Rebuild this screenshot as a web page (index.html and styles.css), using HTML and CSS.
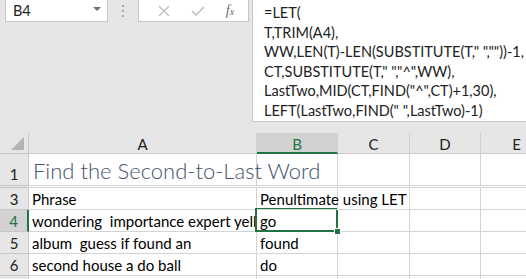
FILE: index.html
```html
<!DOCTYPE html>
<html lang="en">
<head>
    <meta charset="UTF-8" />
    <title>Find the Second-to-Last Word</title>
    <link rel="stylesheet" href="styles.css">
</head>
<body>
    <div class="app">
        <!-- Formula bar area -->
        <div class="topbar">
            <div class="name-box">
                <span>B4</span>
                <span class="caret"></span>
            </div>
            <div class="grip"><i></i><i></i><i></i></div>
            <div class="fx-buttons">
                <svg width="14" height="14" viewBox="0 0 14 14"><path d="M2 2 L12 12 M12 2 L2 12" stroke="#c0c0c0" stroke-width="1.4" fill="none"/></svg>
                <svg width="16" height="14" viewBox="0 0 16 14"><path d="M2 7 L6 11 L14 3" stroke="#c0c0c0" stroke-width="1.6" fill="none"/></svg>
                <span class="fx">f<sub>x</sub></span>
            </div>
            <div class="formula">
                <div>=LET(</div>
                <div>T,TRIM(A4),</div>
                <div>WW,LEN(T)-LEN(SUBSTITUTE(T," ",""))-1,</div>
                <div>CT,SUBSTITUTE(T," ","^",WW),</div>
                <div>LastTwo,MID(CT,FIND("^",CT)+1,30),</div>
                <div>LEFT(LastTwo,FIND(" ",LastTwo)-1)</div>
            </div>
        </div>

        <!-- Worksheet grid -->
        <div class="sheet">
            <div class="hd corner"><span class="tri"></span></div>
            <div class="hd col">A</div>
            <div class="hd col sel">B</div>
            <div class="hd col">C</div>
            <div class="hd col">D</div>
            <div class="hd col">E</div>

            <div class="rh tall">1</div>
            <div class="cell tall title">Find the Second-to-Last Word</div>
            <div class="cell tall"></div>
            <div class="cell tall"></div>
            <div class="cell tall"></div>
            <div class="cell tall"></div>

            <div class="rh hidden"></div>
            <div class="cell hidden"></div>
            <div class="cell hidden"></div>
            <div class="cell hidden"></div>
            <div class="cell hidden"></div>
            <div class="cell hidden"></div>

            <div class="rh">3</div>
            <div class="cell">Phrase</div>
            <div class="cell overflow">Penultimate using LET</div>
            <div class="cell"></div>
            <div class="cell"></div>
            <div class="cell"></div>

            <div class="rh sel">4</div>
            <div class="cell">wondering&nbsp; importance expert yell</div>
            <div class="cell active">go</div>
            <div class="cell"></div>
            <div class="cell"></div>
            <div class="cell"></div>

            <div class="rh">5</div>
            <div class="cell">album&nbsp; guess if found an</div>
            <div class="cell">found</div>
            <div class="cell"></div>
            <div class="cell"></div>
            <div class="cell"></div>

            <div class="rh">6</div>
            <div class="cell">second house a do ball</div>
            <div class="cell">do</div>
            <div class="cell"></div>
            <div class="cell"></div>
            <div class="cell"></div>

            <div class="rh"></div>
            <div class="cell"></div>
            <div class="cell"></div>
            <div class="cell"></div>
            <div class="cell"></div>
            <div class="cell"></div>
        </div>
    </div>
</body>
</html>
```

FILE: styles.css
```css
/* Base */
body {
    margin: 0;
    background-color: #e6e6e6;
    font-family: 'Lato', 'Liberation Sans', sans-serif;
    color: #000;
    overflow: hidden;
}

.app {
    width: 526px;
    height: 279px;
    overflow: hidden;
}

/* Formula bar */
.topbar {
    display: flex;
    align-items: flex-start;
    height: 133px;
}

.name-box {
    margin-left: 5px;
    width: 103px;
    height: 23px;
    margin-top: -1px;
    box-sizing: border-box;
    background-color: #fff;
    border: 1px solid #c6c6c6;
    display: flex;
    align-items: center;
    justify-content: space-between;
    padding: 0 6px 0 7px;
    font-size: 14.5px;
    color: #222;
}

.caret {
    width: 0;
    height: 0;
    border-left: 4px solid transparent;
    border-right: 4px solid transparent;
    border-top: 4px solid #707070;
    margin-top: -3px;
}

.grip {
    width: 30px;
    display: flex;
    flex-direction: column;
    align-items: center;
    gap: 3px;
    padding-top: 5px;
}

.grip i {
    width: 2px;
    height: 2px;
    background-color: #a8a8a8;
}

.fx-buttons {
    width: 111px;
    height: 23px;
    margin-top: -1px;
    box-sizing: border-box;
    background-color: #fff;
    border: 1px solid #c6c6c6;
    display: flex;
    align-items: center;
    justify-content: space-around;
    padding: 0 4px 0 8px;
}

.fx {
    font-family: 'Liberation Serif', serif;
    font-style: italic;
    font-size: 14px;
    color: #6e6e6e;
}

.fx sub {
    font-size: 10px;
    vertical-align: 0;
}

.formula {
    margin-left: 3px;
    flex: 1;
    height: 123px;
    margin-top: -1px;
    box-sizing: border-box;
    background-color: #fff;
    border: 1px solid #c6c6c6;
    border-right: none;
    padding: 3px 0 0 11px;
    font-size: 14.5px;
    line-height: 19.5px;
    color: #222;
    white-space: nowrap;
    overflow: hidden;
}

.formula div {
    height: 19.5px;
}

/* Sheet */
.sheet {
    display: grid;
    grid-template-columns: 29px 228px 81px 72px 71px 72px;
    grid-template-rows: 21px 32px 2px repeat(5, 22px);
    background-color: #fff;
}

.hd,
.rh {
    background-color: #e6e6e6;
    border-right: 1px solid #c8c8c8;
    border-bottom: 1px solid #c8c8c8;
    box-sizing: border-box;
    display: flex;
    align-items: center;
    justify-content: center;
    font-size: 15px;
    color: #222;
}

.hd.col {
    border-right-color: #d0d0d0;
    padding-top: 1px;
}

.hd.sel {
    background-color: #d2d2d2;
    color: #217346;
    border-bottom: 2px solid #217346;
    padding-top: 2px;
}

.corner {
    position: relative;
}

.tri {
    position: absolute;
    right: 4px;
    bottom: 3px;
    width: 0;
    height: 0;
    border-left: 13px solid transparent;
    border-bottom: 13px solid #b4b4b4;
}

.rh.sel {
    background-color: #d2d2d2;
    color: #217346;
    border-right: 2px solid #217346;
}

.rh.tall {
    padding-top: 8px;
}

.cell {
    border-right: 1px solid #d4d4d4;
    border-bottom: 1px solid #d4d4d4;
    box-sizing: border-box;
    font-size: 15px;
    padding: 2px 0 0 3px;
    white-space: nowrap;
    overflow: hidden;
    line-height: 18px;
    color: #000;
}

.cell.overflow {
    overflow: visible;
    position: relative;
    z-index: 1;
}

.cell.title {
    overflow: visible;
    font-size: 22px;
    font-weight: 300;
    color: #44546a;
    padding: 4px 0 0 4px;
    line-height: 26px;
    position: relative;
    z-index: 1;
}

.cell.hidden,
.rh.hidden {
    border-right: none;
    padding: 0;
}

.cell.active {
    position: relative;
    overflow: visible;
}

.cell.active::before {
    content: "";
    position: absolute;
    left: -2px;
    top: -2px;
    right: -1px;
    bottom: -1px;
    border: 2px solid #217346;
}

.cell.active::after {
    content: "";
    position: absolute;
    right: -4px;
    bottom: -4px;
    width: 5px;
    height: 5px;
    background-color: #217346;
    border: 1px solid #fff;
}
```
